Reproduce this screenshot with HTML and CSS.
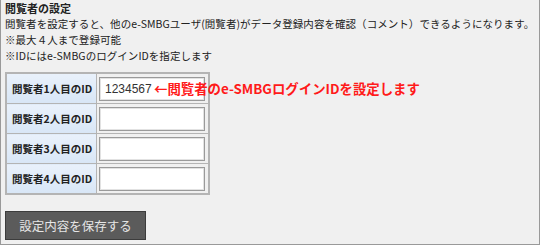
FILE: index.html
```html
<!DOCTYPE html>
<html lang="ja">
<head>
<meta charset="utf-8">
<link rel="stylesheet" href="styles.css">
</head>
<body>
<div class="panel">
  <div class="title">閲覧者の設定</div>
  <p class="desc">閲覧者を設定すると、他のe-SMBGユーザ(閲覧者)がデータ登録内容を確認（コメント）できるようになります。</p>
  <p class="desc">※最大４人まで登録可能</p>
  <p class="desc">※IDにはe-SMBGのログインIDを指定します</p>
  <table class="grid">
    <tr>
      <th>閲覧者1人目のID</th>
      <td class="cell-first"><span class="field">1234567</span><span class="note">←閲覧者のe-SMBGログインIDを設定します</span></td>
    </tr>
    <tr>
      <th>閲覧者2人目のID</th>
      <td><span class="field"></span></td>
    </tr>
    <tr>
      <th>閲覧者3人目のID</th>
      <td><span class="field"></span></td>
    </tr>
    <tr>
      <th>閲覧者4人目のID</th>
      <td><span class="field"></span></td>
    </tr>
  </table>
  <button class="save">設定内容を保存する</button>
</div>
</body>
</html>
```
FILE: styles.css
```css
html, body {
  margin: 0;
  padding: 0;
  background: #f0f0f0;
}
.panel {
  box-sizing: border-box;
  width: 540px;
  height: 245px;
  overflow: hidden;
  background: #f0f0f0;
  border-left: 1px solid #999;
  border-right: 1px solid #999;
  border-bottom: 1px solid #999;
  padding: 0 4px 0 4px;
  font-family: "Noto Sans CJK JP", "Noto Sans", sans-serif;
  font-size: 10.5px;
  line-height: 16px;
  color: #222;
}
.title {
  font-weight: bold;
  font-size: 11px;
  height: 16px;
}
.desc {
  margin: 0;
  height: 16px;
  white-space: nowrap;
  letter-spacing: 0.05px;
}
.grid {
  margin-top: 8px;
  border-collapse: collapse;
  border: 2px solid #b4b4b4;
}
.grid th, .grid td {
  border: 1px solid #b4b4b4;
  height: 29px;
  padding: 0;
}
.grid th {
  width: 84px;
  padding-left: 5px;
  text-align: left;
  font-weight: bold;
  font-size: 10.5px;
  background: linear-gradient(#e9f1fb, #d8e6f6);
}
.grid td {
  width: 106px;
  padding: 0 3px 0 2px;
  background: #f0f0f0;
}
.cell-first {
  position: relative;
}
.field {
  display: block;
  box-sizing: border-box;
  width: 106px;
  height: 24px;
  background: #fff;
  border: 1px solid #9a9a9a;
  box-shadow: inset 0 0 0 1px #e2e2e2;
  padding: 0 5px;
  font-family: "Liberation Sans", Arial, sans-serif;
  font-size: 12px;
  line-height: 22px;
  color: #333;
}
.note {
  position: absolute;
  left: 57px;
  top: 6px;
  white-space: nowrap;
  color: #ff1a1a;
  font-weight: bold;
  font-size: 13.4px;
  line-height: 16px;
}
.save {
  display: block;
  margin-top: 16px;
  width: 141px;
  height: 29px;
  background: #5b5b5b;
  border: 1px solid #3c3c3c;
  color: #e6e6e6;
  font-family: "Noto Sans CJK JP", sans-serif;
  font-size: 12.5px;
  padding: 0;
}
```
